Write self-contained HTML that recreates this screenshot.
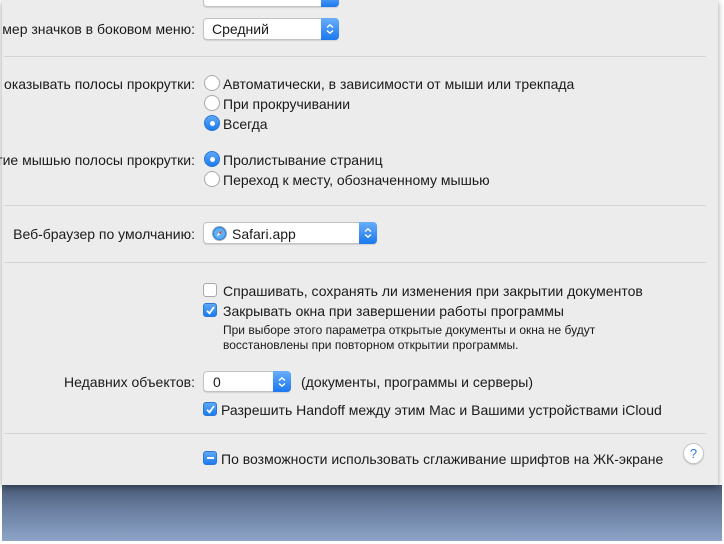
<!DOCTYPE html>
<html><head><meta charset="utf-8"><style>
*{margin:0;padding:0;box-sizing:border-box}
body{width:724px;height:544px;overflow:hidden;background:#fff;position:relative;font-family:"Liberation Sans",Helvetica,Arial,sans-serif;font-size:14px;color:#1a1a1a}
#bg{position:absolute;left:2px;top:485px;width:720px;height:56px;background:linear-gradient(180deg,#4a5a76 0%,#6a7fa1 45%,#8da4c8 100%)}
#win{position:absolute;left:2px;top:0;width:716px;height:485px;background:#ececec;box-shadow:0 2px 6px rgba(0,0,0,.4)}
.t{position:absolute;white-space:nowrap;line-height:16px}
.r{position:absolute;text-align:right;white-space:nowrap;line-height:16px}
.sep{position:absolute;left:2px;width:702px;height:1px;background:#d4d4d4}
.radio{position:absolute;width:16px;height:16px;border-radius:50%;background:#fff;border:1px solid #a9a9a9}
.radio.on{background:linear-gradient(#5fa7f7,#1a7cf0);border-color:#2b78d6}
.radio.on:after{content:"";position:absolute;left:4.5px;top:4.5px;width:5px;height:5px;border-radius:50%;background:#fff}
.cb{position:absolute;width:14px;height:14px;border-radius:3px;background:#fff;border:1px solid #a9a9a9}
.cb.on{background:linear-gradient(#5fa7f7,#1a7cf0);border-color:#2b78d6}
.pop{position:absolute;background:#fff;border:1px solid #c2c2c2;border-radius:4px;box-shadow:0 1px 1px rgba(0,0,0,.12)}
.pop .ar{position:absolute;right:-1px;top:-1px;bottom:-1px;width:18px;border-radius:0 4px 4px 0;background:linear-gradient(#68aef8,#1b78ef)}
.pop .ar svg{position:absolute;left:4px;top:50%;margin-top:-6px}
.sm{font-size:12px}
</style></head><body>
<div id="bg"></div>
<div id="win">
<div class="pop" style="left:201px;top:-6px;width:136px;height:13px"><div class="ar"></div></div>

<div class="r" style="right:523px;top:21px">мер значков в боковом меню:</div>
<div class="pop" style="left:201px;top:18px;width:136px;height:22px"><span class="t" style="left:8px;top:2px">Средний</span><div class="ar"><svg width="10" height="12" viewBox="0 0 10 12"><path d="M2 4.5L5 1.8 8 4.5M2 7.5L5 10.2 8 7.5" fill="none" stroke="#fff" stroke-width="1.4"/></svg></div></div>

<div class="sep" style="top:56px"></div>

<div class="r" style="right:523px;top:76px">оказывать полосы прокрутки:</div>
<div class="radio" style="left:202px;top:75px"></div><div class="t" style="left:221px;top:76px">Автоматически, в зависимости от мыши или трекпада</div>
<div class="radio" style="left:202px;top:95px"></div><div class="t" style="left:221px;top:96px">При прокручивании</div>
<div class="radio on" style="left:202px;top:115px"></div><div class="t" style="left:221px;top:116px">Всегда</div>

<div class="r" style="right:523px;top:152px">тие мышью полосы прокрутки:</div>
<div class="radio on" style="left:202px;top:151px"></div><div class="t" style="left:221px;top:152px">Пролистывание страниц</div>
<div class="radio" style="left:202px;top:171px"></div><div class="t" style="left:221px;top:172px">Переход к месту, обозначенному мышью</div>

<div class="sep" style="top:205px"></div>

<div class="r" style="right:523px;top:226px">Веб-браузер по умолчанию:</div>
<div class="pop" style="left:201px;top:222px;width:174px;height:22px">
<svg style="position:absolute;left:8px;top:3px" width="15" height="15" viewBox="0 0 15 15"><circle cx="7.5" cy="7.5" r="7" fill="#2f7fe0" stroke="#9ab" stroke-width="1"/><circle cx="7.5" cy="7.5" r="5.5" fill="#5ab0f5"/><path d="M10.5 4.5L8.3 8.3 4.5 10.5 6.7 6.7Z" fill="#fff"/><path d="M10.5 4.5L6.7 6.7 8.3 8.3Z" fill="#e33"/></svg>
<span class="t" style="left:28px;top:3px">Safari.app</span><div class="ar"><svg width="10" height="12" viewBox="0 0 10 12"><path d="M2 4.5L5 1.8 8 4.5M2 7.5L5 10.2 8 7.5" fill="none" stroke="#fff" stroke-width="1.4"/></svg></div></div>

<div class="sep" style="top:262px"></div>

<div class="cb" style="left:201px;top:283px"></div><div class="t" style="left:221px;top:283px">Спрашивать, сохранять ли изменения при закрытии документов</div>
<div class="cb on" style="left:201px;top:303px"><svg style="position:absolute;left:1px;top:1px" width="11" height="11" viewBox="0 0 11 11"><path d="M2 5.8L4.5 8.3 9 2" fill="none" stroke="#fff" stroke-width="1.8"/></svg></div><div class="t" style="left:221px;top:303px">Закрывать окна при завершении работы программы</div>
<div class="t sm" style="left:221px;top:322px">При выборе этого параметра открытые документы и окна не будут</div>
<div class="t sm" style="left:221px;top:337px">восстановлены при повторном открытии программы.</div>

<div class="r" style="right:523px;top:374px">Недавних объектов:</div>
<div class="pop" style="left:201px;top:371px;width:88px;height:21px"><span class="t" style="left:9px;top:2px">0</span><div class="ar"><svg width="10" height="12" viewBox="0 0 10 12"><path d="M2 4.5L5 1.8 8 4.5M2 7.5L5 10.2 8 7.5" fill="none" stroke="#fff" stroke-width="1.4"/></svg></div></div>
<div class="t" style="left:299px;top:374px">(документы, программы и серверы)</div>

<div class="cb on" style="left:201px;top:402px"><svg style="position:absolute;left:1px;top:1px" width="11" height="11" viewBox="0 0 11 11"><path d="M2 5.8L4.5 8.3 9 2" fill="none" stroke="#fff" stroke-width="1.8"/></svg></div><div class="t" style="left:219px;top:402px">Разрешить Handoff между этим Mac и Вашими устройствами iCloud</div>

<div class="sep" style="top:433px"></div>

<div class="cb on" style="left:201px;top:451px"><div style="position:absolute;left:2.5px;top:5px;width:7px;height:2px;background:#fff"></div></div><div class="t" style="left:219px;top:451px">По возможности использовать сглаживание шрифтов на ЖК-экране</div>
<div style="position:absolute;left:681px;top:443px;width:21px;height:21px;border-radius:50%;background:#fff;border:1px solid #c4c4c4;box-shadow:0 1px 1px rgba(0,0,0,.15);text-align:center;line-height:19px;color:#2a7be4;font-size:13px">?</div>
</div>
</body></html>
